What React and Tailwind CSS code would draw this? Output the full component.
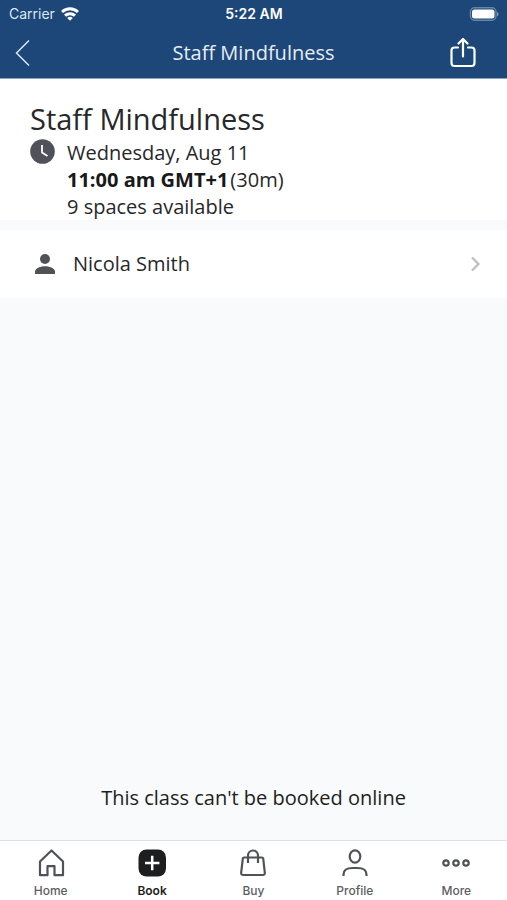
const tabs = [
  { label: "Home", icon: HomeIcon },
  { label: "Book", icon: BookIcon },
  { label: "Buy", icon: BagIcon },
  { label: "Profile", icon: ProfileIcon },
  { label: "More", icon: MoreIcon },
];

function WifiIcon() {
  return (
    <svg width="18" height="14" viewBox="0 0 18 14" fill="none" stroke="currentColor" strokeWidth="3">
      <path d="M1 5a11.4 11.4 0 0 1 16 0" />
      <path d="M4 8.700a7.200 7.200 0 0 1 10 0" />
      <path d="M9 13.800 6.200 11a4 4 0 0 1 5.600 0z" fill="currentColor" stroke="none" />
    </svg>
  );
}

function BatteryIcon() {
  return (
    <svg width="31" height="14" viewBox="0 0 31 14" fill="none">
      <rect x="2.500" y="0.800" width="25.500" height="12.400" rx="4" stroke="#6884a8" strokeWidth="1.400" />
      <rect x="4" y="2.500" width="22.500" height="9" rx="2.500" fill="white" />
      <path d="M29 5v4.400q1.500-.6 1.500-2.200T29 5z" fill="#7e98b8" />
    </svg>
  );
}

function HomeIcon() {
  return (
    <svg width="28" height="28" viewBox="0 0 28 28" fill="none" stroke="#505257" strokeWidth="2.200" strokeLinejoin="round">
      <path d="M14.500 1.500 3 12.500v13.700h7.500v-9h7v9H26V12.500z" />
    </svg>
  );
}

function BookIcon() {
  return (
    <svg width="28" height="28" viewBox="0 0 28 28" fill="none">
      <rect x="0.500" y="0.500" width="27.500" height="27" rx="8" fill="#1d1e20" />
      <path d="M14.200 6.800v14.400M7 14h14.400" stroke="white" strokeWidth="2.500" />
    </svg>
  );
}

function BagIcon() {
  return (
    <svg width="28" height="28" viewBox="0 0 28 28" fill="none" stroke="#505257" strokeWidth="2.200" strokeLinejoin="round">
      <path d="M5 8.500h18q1 0 1.200 1l1.600 14q.2 2.500-2 2.500H4.200q-2.200 0-2-2.500l1.600-14q.2-1 1.200-1z" />
      <path d="M9 14V6.500a5 5 0 0 1 10 0V14" />
    </svg>
  );
}

function ProfileIcon() {
  return (
    <svg width="28" height="28" viewBox="0 0 28 28" fill="none" stroke="#505257" strokeWidth="2.200">
      <ellipse cx="14" cy="7.500" rx="5.300" ry="6.200" />
      <path d="M2.500 27v-1.500q0-6.500 9-6.500h5q9 0 9 6.500V27" />
    </svg>
  );
}

function MoreIcon() {
  return (
    <svg width="28" height="28" viewBox="0 0 28 28" fill="none" stroke="#505257" strokeWidth="2.200">
      <circle cx="4" cy="14" r="2.700" />
      <circle cx="14" cy="14" r="2.700" />
      <circle cx="24" cy="14" r="2.700" />
    </svg>
  );
}

function App() {
  return (
    <div className="flex min-h-screen flex-col bg-[#f8fafc] font-['Open_Sans',sans-serif] text-[#27282a]">
      <header className="border-b border-[#8ba4c4] bg-[#1d4778] text-white">
        {/* status bar */}
        <div className="grid h-7 grid-cols-3 items-center pr-2 pl-[9px] font-['Inter',sans-serif] text-sm">
          <div className="flex items-center gap-1.5 text-[#dce6f2]">
            <span>Carrier</span>
            <span className="text-white"><WifiIcon /></span>
          </div>
          <p className="text-center font-semibold">5:22 AM</p>
          <div className="flex justify-end"><BatteryIcon /></div>
        </div>

        {/* title bar */}
        <div className="flex h-[50px] items-center justify-between pr-7 pl-3.5">
          <button aria-label="Back" className="w-[46px]">
            <svg width="17" height="28" viewBox="0 0 17 28" fill="none" stroke="#dce6f2" strokeWidth="1.500">
              <path d="M15 1.500 2.500 14 15 26.500" />
            </svg>
          </button>
          <h1 className="text-xl text-[#e6edf6]">Staff Mindfulness</h1>
          <button aria-label="Share" className="flex w-8 justify-center">
            <svg width="28" height="32" viewBox="0 0 28 32" fill="none" stroke="white" strokeWidth="2.200" strokeLinecap="round" strokeLinejoin="round">
              <path d="M9 10.500H5.500q-3 0-3 3V26q0 3 3 3h17q3 0 3-3V13.500q0-3-3-3H19" />
              <path d="M14 19.500V2.500M9.500 6.500l4.500-4.500 4.500 4.500" />
            </svg>
          </button>
        </div>
      </header>

      <section className="bg-white px-[30px] pt-5">
        <h2 className="text-[29px] leading-10">Staff Mindfulness</h2>
        <div className="flex gap-3 text-xl leading-[27px]">
          <svg width="25" height="25" viewBox="0 0 25 25" fill="none" className="shrink-0">
            <circle cx="12.500" cy="12.500" r="12.300" fill="#505159" />
            <path d="M12 6v7.500l5.500 3.500" stroke="white" strokeWidth="1.800" />
          </svg>
          <div>
            <p>Wednesday, Aug 11</p>
            <p className="flex gap-0.5">
              <strong className="font-bold text-[#18191b]">11:00 am GMT+1</strong>
              <span>(30m)</span>
            </p>
            <p>9 spaces available</p>
          </div>
        </div>
      </section>

      <a href="#instructor" className="mt-2.5 flex h-[68px] items-center bg-white pr-[26px] pl-[35px]">
        <svg width="20" height="20" viewBox="0 0 20 20" fill="#505257">
          <circle cx="10" cy="5" r="5" />
          <path d="M0 20v-2.500C0 14 6.500 12.300 10 12.300s10 1.700 10 5.200V20z" />
        </svg>
        <span className="ml-[18px] grow text-xl">Nicola Smith</span>
        <svg width="11" height="16" viewBox="0 0 11 16" fill="none" stroke="#bdbec0" strokeWidth="2.200">
          <path d="m2 1.500 6.500 6.500L2 14.500" />
        </svg>
      </a>

      <main className="flex grow flex-col justify-end pb-7">
        <p className="text-center text-xl text-[#1d1e20]">This class can't be booked online</p>
      </main>

      <nav className="grid h-[60px] grid-cols-5 border-t border-[#dedfe1] bg-white font-['Inter',sans-serif]">
        {tabs.map(({ label, icon: Icon }) => (
          <button
            key={label}
            className={`flex flex-col items-center pt-2 text-xs ${
              label === "Book" ? "font-semibold text-[#1d1e20]" : "font-medium text-[#5c5e62]"
            }`}
          >
            <Icon />
            <span className="mt-1.5">{label}</span>
          </button>
        ))}
      </nav>
    </div>
  );
}

export default App;
